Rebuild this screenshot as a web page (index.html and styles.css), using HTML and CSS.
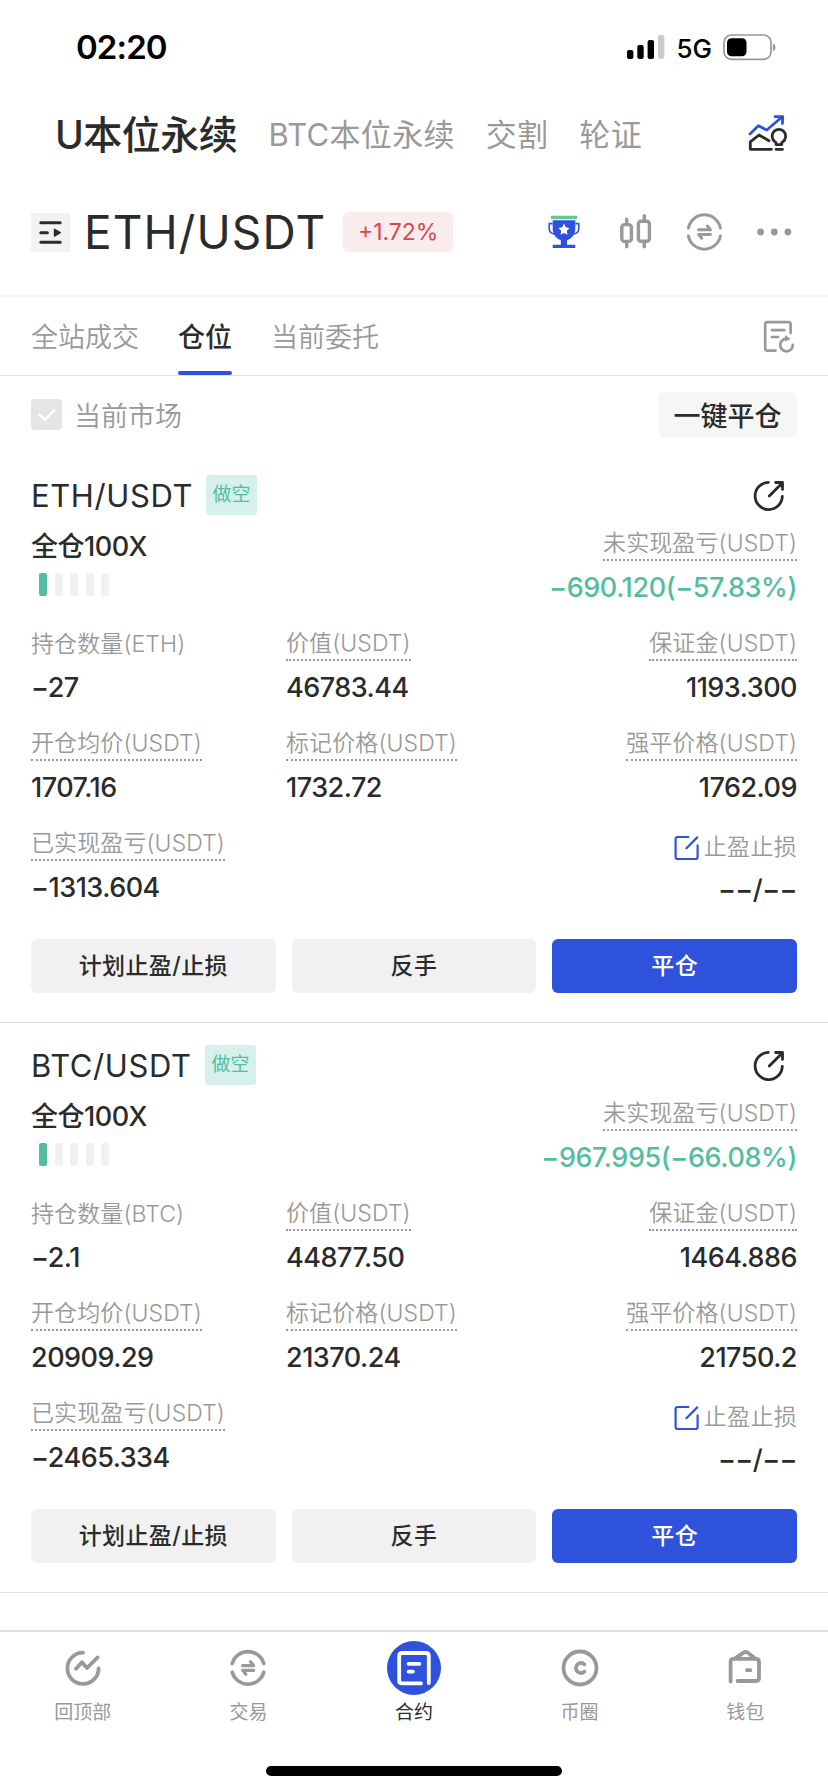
FILE: index.html
```html
<!DOCTYPE html>
<html lang="zh-CN">

<head>
    <meta charset="UTF-8">
    <title>合约 - 仓位</title>
    <link rel="stylesheet" href="styles.css">
</head>

<body>
    <!-- 状态栏 -->
    <div class="status_bar">
        <span class="status_time">02:20</span>
        <svg class="status_signal" width="38" height="26" viewBox="0 0 38 26">
            <rect x="0" y="16" width="6.4" height="9" rx="2" />
            <rect x="10.3" y="11" width="6.4" height="14" rx="2" />
            <rect x="20.6" y="6" width="6.4" height="19" rx="2" />
            <rect x="31" y="1" width="6.4" height="24" rx="2" fill="#ccc" />
        </svg>
        <span class="status_net">5G</span>
        <svg class="status_battery" width="54" height="27" viewBox="0 0 54 27">
            <rect x="1" y="1" width="47" height="24.4" rx="7.5" fill="none" stroke="#999" stroke-width="1.7" />
            <rect x="4" y="4.2" width="19.5" height="18" rx="4.5" />
            <path d="M49.8 9.5c3.6 1.2 3.6 6.6 0 7.8z" fill="#999" />
        </svg>
    </div>

    <!-- 合约类型 -->
    <div class="type_nav">
        <span class="type_item type_on">U本位永续</span>
        <span class="type_item">BTC本位永续</span>
        <span class="type_item">交割</span>
        <span class="type_item">轮证</span>
        <svg class="type_icon" width="46" height="44" viewBox="0 0 46 44" fill="none" stroke="#2b2b2b" stroke-width="2.8" stroke-linecap="round" stroke-linejoin="round">
            <path d="M5 24L13.3 15.7L21.7 20L37 7M30 6.7H37.8L37.4 13.5" stroke="#2f52dd" />
            <path d="M24 30.7L14 25L5.3 31.8V39.3H26.5M31 39.3H37.5" />
            <path d="M31 34.6V32.4C28.6 31.2 27.2 29 27.2 26A6.7 6.7 0 0 1 40.6 26C40.6 29 39.2 31.2 36.8 32.4V34.6Z" />
        </svg>
    </div>

    <!-- 当前币对 -->
    <div class="pair_bar">
        <span class="pair_menu">
            <svg width="39" height="39" viewBox="0 0 39 39" stroke="#2b2b2b" stroke-width="3" stroke-linecap="round">
                <path d="M9.8 9.7H29.2M9.8 19.7H16.4M9.8 29.3H29.2" />
                <path d="M23.5 16.3V23.1L29.3 19.7Z" fill="#2b2b2b" stroke-width="1.4" stroke-linejoin="round" />
            </svg>
        </span>
        <span class="pair_name">ETH/USDT</span>
        <span class="pair_rate">+1.72%</span>
        <div class="pair_tools">
            <svg width="40" height="40" viewBox="0 0 40 40">
                <path d="M7 3.7H33V7H7Z" fill="#5ecb93" />
                <path d="M8.7 8.3H31.3V17C31.3 22.5 28 26.5 23 28.2V32.8H31.3V36H8.7V32.8H16.8V28.2C12 26.5 8.7 22.5 8.7 17Z" fill="#2f52dd" />
                <path d="M8.7 11.6H5.2V16.5C5.2 19.5 7.5 21.6 10.5 22M31.3 11.6H34.8V16.5C34.8 19.5 32.5 21.6 29.5 22" fill="none" stroke="#2f52dd" stroke-width="1.6" />
                <path d="M20 11.6L21.8 15.3L25.6 15.9L22.8 18.7L23.5 22.8L20 20.9L16.5 22.8L17.2 18.7L14.4 15.9L18.2 15.3Z" fill="#fff" />
            </svg>
            <svg width="40" height="40" viewBox="0 0 40 40" fill="none" stroke="#999" stroke-width="3.4" stroke-linecap="round">
                <rect x="7.8" y="12.6" width="9.6" height="16.8" rx="2.6" />
                <rect x="24.4" y="9.2" width="11" height="20" rx="2.6" />
                <path d="M12.7 7.2V12M12.7 30V34.8M30.3 3.8V9M30.3 30V34.8" />
            </svg>
            <svg width="40" height="40" viewBox="0 0 40 40" fill="none" stroke="#999" stroke-width="3" stroke-linecap="round" stroke-linejoin="round">
                <path d="M4.4 16A16.3 16.3 0 0 1 36.4 16M36.4 24A16.3 16.3 0 0 1 4.4 24" />
                <path d="M14.6 17.8H26.4L23.4 14M26.4 22.4H14.6M17.8 26.2L15 22.8" />
            </svg>
            <svg width="40" height="40" viewBox="0 0 40 40" fill="#999">
                <circle cx="6.6" cy="20" r="3.4" />
                <circle cx="20.3" cy="20" r="3.4" />
                <circle cx="33.9" cy="20" r="3.4" />
            </svg>
        </div>
    </div>

    <!-- 选项卡 -->
    <div class="tabs">
        <span class="tab">全站成交</span>
        <span class="tab tab_on">仓位</span>
        <span class="tab">当前委托</span>
        <svg class="tabs_icon" width="34" height="34" viewBox="0 0 34 34" fill="none" stroke="#999" stroke-width="2.7" stroke-linecap="round" stroke-linejoin="round">
            <path d="M28.6 14V5.2Q28.6 3.2 26.6 3.2H5.2Q3.2 3.2 3.2 5.2V29.6Q3.2 31.6 5.2 31.6H13.6M10 11.2H22.3M10 18H16" />
            <path d="M30.8 25.8A6.3 6.3 0 1 1 24.6 19.7" />
            <path d="M23.5 17V21.6L27.6 20Z" fill="#999" stroke-width="1.2" />
        </svg>
    </div>

    <div class="filter">
        <span class="check">
            <svg width="31" height="31" viewBox="0 0 31 31" fill="none" stroke="#fff" stroke-width="2.6">
                <path d="M7.6 15L13.8 20.8L24 10.6" />
            </svg>
        </span>
        <span class="check_text">当前市场</span>
        <span class="close_all">一键平仓</span>
    </div>

    <!-- 持仓列表 -->
    <div class="list">
        <div class="card">
            <div class="card_head">
                <span class="card_name">ETH/USDT</span>
                <span class="card_side">做空</span>
                <svg class="card_share" width="34" height="34" viewBox="0 0 34 34" fill="none" stroke="#2b2b2b" stroke-width="2.8" stroke-linecap="round" stroke-linejoin="round">
                    <path d="M16.3 3.4A13.6 13.6 0 1 0 30.3 17.4M17.3 17L30 4.2M23.6 3.5H30.5V10.4" />
                </svg>
            </div>
            <div class="card_info">
                <div class="card_mode">
                    <div class="mode_text">全仓100X</div>
                    <div class="level"><i class="level_on"></i><i></i><i></i><i></i><i></i></div>
                </div>
                <div class="cell cell_right cell_profit">
                    <span class="label dotted">未实现盈亏(USDT)</span>
                    <span class="profit">−690.120(−57.83%)</span>
                </div>
            </div>
            <div class="card_grid">
                <div class="cell"><span class="label">持仓数量(ETH)</span><span class="value">−27</span></div>
                <div class="cell"><span class="label dotted">价值(USDT)</span><span class="value">46783.44</span></div>
                <div class="cell cell_right"><span class="label dotted">保证金(USDT)</span><span class="value">1193.300</span></div>
                <div class="cell"><span class="label dotted">开仓均价(USDT)</span><span class="value">1707.16</span></div>
                <div class="cell"><span class="label dotted">标记价格(USDT)</span><span class="value">1732.72</span></div>
                <div class="cell cell_right"><span class="label dotted">强平价格(USDT)</span><span class="value">1762.09</span></div>
                <div class="cell"><span class="label dotted">已实现盈亏(USDT)</span><span class="value">−1313.604</span></div>
                <div class="cell"></div>
                <div class="cell cell_right cell_stop">
                    <span class="label"><svg class="edit" width="26" height="26" viewBox="0 0 26 26" fill="none" stroke="#2f52dd" stroke-width="2.2" stroke-linecap="round" stroke-linejoin="round"><path d="M14.4 2H3.6Q1.6 2 1.6 4V22Q1.6 24 3.6 24H21.6Q23.6 24 23.6 22V10.4M12.4 13.2L23.2 2.4" /></svg>止盈止损</span>
                    <span class="value value_none">−−/−−</span>
                </div>
            </div>
            <div class="card_btns">
                <span class="btn">计划止盈/止损</span>
                <span class="btn">反手</span>
                <span class="btn btn_main">平仓</span>
            </div>
        </div>

        <div class="card">
            <div class="card_head">
                <span class="card_name">BTC/USDT</span>
                <span class="card_side">做空</span>
                <svg class="card_share" width="34" height="34" viewBox="0 0 34 34" fill="none" stroke="#2b2b2b" stroke-width="2.8" stroke-linecap="round" stroke-linejoin="round">
                    <path d="M16.3 3.4A13.6 13.6 0 1 0 30.3 17.4M17.3 17L30 4.2M23.6 3.5H30.5V10.4" />
                </svg>
            </div>
            <div class="card_info">
                <div class="card_mode">
                    <div class="mode_text">全仓100X</div>
                    <div class="level"><i class="level_on"></i><i></i><i></i><i></i><i></i></div>
                </div>
                <div class="cell cell_right cell_profit">
                    <span class="label dotted">未实现盈亏(USDT)</span>
                    <span class="profit">−967.995(−66.08%)</span>
                </div>
            </div>
            <div class="card_grid">
                <div class="cell"><span class="label">持仓数量(BTC)</span><span class="value">−2.1</span></div>
                <div class="cell"><span class="label dotted">价值(USDT)</span><span class="value">44877.50</span></div>
                <div class="cell cell_right"><span class="label dotted">保证金(USDT)</span><span class="value">1464.886</span></div>
                <div class="cell"><span class="label dotted">开仓均价(USDT)</span><span class="value">20909.29</span></div>
                <div class="cell"><span class="label dotted">标记价格(USDT)</span><span class="value">21370.24</span></div>
                <div class="cell cell_right"><span class="label dotted">强平价格(USDT)</span><span class="value">21750.2</span></div>
                <div class="cell"><span class="label dotted">已实现盈亏(USDT)</span><span class="value">−2465.334</span></div>
                <div class="cell"></div>
                <div class="cell cell_right cell_stop">
                    <span class="label"><svg class="edit" width="26" height="26" viewBox="0 0 26 26" fill="none" stroke="#2f52dd" stroke-width="2.2" stroke-linecap="round" stroke-linejoin="round"><path d="M14.4 2H3.6Q1.6 2 1.6 4V22Q1.6 24 3.6 24H21.6Q23.6 24 23.6 22V10.4M12.4 13.2L23.2 2.4" /></svg>止盈止损</span>
                    <span class="value value_none">−−/−−</span>
                </div>
            </div>
            <div class="card_btns">
                <span class="btn">计划止盈/止损</span>
                <span class="btn">反手</span>
                <span class="btn btn_main">平仓</span>
            </div>
        </div>
    </div>

    <!-- 底部导航 -->
    <div class="footer">
        <div class="foot_nav">
            <div class="foot_item">
                <svg width="54" height="54" viewBox="0 0 54 54" fill="none" stroke="#999" stroke-width="3.8" stroke-linecap="round" stroke-linejoin="round">
                    <path d="M27 11.7A15.6 15.6 0 1 0 42.6 27.4M20 27.8L26 21.2L31 27L41.6 16.4" />
                </svg>
                <span>回顶部</span>
            </div>
            <div class="foot_item">
                <svg width="54" height="54" viewBox="0 0 54 54" fill="none" stroke="#999" stroke-width="3.6" stroke-linecap="round" stroke-linejoin="round">
                    <path d="M11.2 22.6A16.4 16.4 0 0 1 42.8 22.6M42.8 31.2A16.4 16.4 0 0 1 11.2 31.2" />
                    <path d="M21.6 24.6H32.6L29.4 20.8M32.6 29.4H21.6M24.8 33.2L22 29.6" stroke-width="3.2" />
                </svg>
                <span>交易</span>
            </div>
            <div class="foot_item foot_on">
                <svg width="54" height="54" viewBox="0 0 54 54" fill="none" stroke="#fff" stroke-width="3.8" stroke-linecap="round" stroke-linejoin="round">
                    <circle cx="27" cy="27" r="27" fill="#2f52dd" stroke="none" />
                    <path d="M41.8 42V15Q41.8 12 38.8 12H15.2Q12.2 12 12.2 15V39.4Q12.2 42.4 15.2 42.4H34M21.6 22.8H32.4M21.6 30.6H26" />
                </svg>
                <span>合约</span>
            </div>
            <div class="foot_item">
                <svg width="54" height="54" viewBox="0 0 54 54" fill="none" stroke="#999" stroke-width="3.8" stroke-linecap="round">
                    <circle cx="27" cy="27" r="16.5" />
                    <path d="M31.4 23.4A5 5 0 1 0 31.4 30.6" />
                </svg>
                <span>币圈</span>
            </div>
            <div class="foot_item">
                <svg width="54" height="54" viewBox="0 0 54 54" fill="none" stroke="#999" stroke-width="3.8" stroke-linecap="round" stroke-linejoin="round">
                    <path d="M12.6 40.4V20.8Q12.6 17.8 15.6 17.8H38Q41 17.8 41 20.8V37Q41 40 38 40H19.6M17 17.4L25.6 11.6Q27.6 10.4 29.6 11.6L36 16.6M29 29.2H32.4" />
                </svg>
                <span>钱包</span>
            </div>
        </div>
        <div class="home_bar"></div>
    </div>
</body>

</html>
```
FILE: styles.css
```css
* {
    box-sizing: border-box;
}

body {
    display: flex;
    flex-direction: column;
    width: 828px;
    height: 1792px;
    margin: 0;
    overflow: hidden;
    background-color: #fff;
    color: #2b2b2b;
    font-family: Inter, "Noto Sans CJK SC", sans-serif;
    white-space: nowrap;
}

svg {
    display: block;
    flex: none;
}

/* 状态栏 */
.status_bar {
    display: flex;
    align-items: center;
    height: 94px;
    padding: 0 51px 0 76px;
    color: #000;
}

.status_time {
    margin-right: auto;
    font-size: 33px;
    font-weight: 600;
    letter-spacing: -0.9px;
}

.status_net {
    margin: 2px 11px 0 11px;
    font-size: 26px;
    font-weight: 500;
}

/* 合约类型 */
.type_nav {
    display: flex;
    align-items: center;
    height: 80px;
    padding: 0 37px 4px 55px;
}

.type_item {
    margin-right: 31px;
    color: #999;
    font-size: 31px;
    letter-spacing: 0.3px;
}

.type_on {
    color: #2b2b2b;
    font-size: 39px;
    font-weight: 450;
    letter-spacing: -0.5px;
}

.type_icon {
    margin-left: auto;
}

/* 当前币对 */
.pair_bar {
    display: flex;
    align-items: center;
    height: 121px;
    padding: 0 34px 5px 31px;
}

.pair_menu {
    background-color: #f2f2f2;
}

.pair_name {
    margin-left: 14px;
    font-size: 46px;
    letter-spacing: 1.1px;
}

.pair_rate {
    margin-left: 17px;
    width: 110px;
    border-radius: 6px;
    background-color: #faeced;
    color: #d9474a;
    font-size: 23px;
    line-height: 40px;
    text-align: center;
}

.pair_tools {
    display: flex;
    gap: 30px;
    margin-left: auto;
}

/* 选项卡 */
.tabs {
    display: flex;
    align-items: center;
    height: 81px;
    padding: 0 32px 0 31px;
    border-top: 2px solid #f6f6f6;
    border-bottom: 1px solid #e4e4e4;
}

.tab {
    height: 78px;
    margin-right: 39px;
    color: #999;
    font-size: 27px;
    font-weight: 350;
    line-height: 81px;
}

.tab_on {
    position: relative;
    color: #2b2b2b;
    font-weight: 500;
}

.tab_on::after {
    content: "";
    position: absolute;
    left: 0;
    right: 0;
    bottom: 0;
    height: 4px;
    border-radius: 2px;
    background-color: #2f52dd;
}

.tabs_icon {
    margin-left: auto;
}

.filter {
    display: flex;
    align-items: center;
    height: 77px;
    padding: 0 31px;
}

.check {
    border-radius: 4px;
    background-color: #e5e5e5;
}

.check_text {
    margin-left: 12px;
    color: #999;
    font-size: 27px;
    font-weight: 350;
}

.close_all {
    width: 139px;
    height: 46px;
    margin-left: auto;
    border-radius: 6px;
    background-color: #f6f6f6;
    font-size: 27px;
    font-weight: 500;
    line-height: 49px;
    text-align: center;
}

/* 持仓 */
.list {
    flex: 1;
}

.card {
    height: 570px;
    padding: 22px 31px 0 31px;
    border-bottom: 1px solid #dedede;
}

.card_head {
    display: flex;
    align-items: center;
    height: 40px;
}

.card_name {
    min-width: 161px;
    font-size: 31px;
    letter-spacing: 0.6px;
}

.card_side {
    width: 51px;
    margin-left: 13px;
    border-radius: 3px;
    background-color: #d6f1eb;
    color: #54bda0;
    font-size: 19px;
    line-height: 40px;
    text-align: center;
}

.card_share {
    margin: 2px 11px 0 auto;
}

.card_info {
    display: flex;
    justify-content: space-between;
    height: 105px;
}

.mode_text {
    margin-top: 13px;
    font-size: 27px;
    font-weight: 450;
    letter-spacing: -0.5px;
    line-height: 38px;
}

.level {
    display: flex;
    gap: 7.5px;
    margin: 7px 0 0 8px;
}

.level i {
    width: 8px;
    height: 23px;
    border-radius: 2px;
    background-color: #f1f1f1;
}

.level .level_on {
    background-color: #54bda0;
}

.card_grid {
    display: grid;
    grid-template-columns: 255px 255px 1fr;
    grid-auto-rows: 100px;
}

.cell {
    display: flex;
    flex-direction: column;
    align-items: flex-start;
    padding-top: 8px;
}

.cell_right {
    align-items: flex-end;
}

.cell_profit {
    padding-top: 13px;
}

.label {
    display: flex;
    align-items: center;
    height: 33px;
    color: #999;
    font-size: 23px;
    font-weight: 350;
    letter-spacing: 0.1px;
    line-height: 31px;
}

.dotted {
    border-bottom: 2px dotted #999;
}

.value {
    margin-top: 9px;
    font-size: 27px;
    font-weight: 450;
    letter-spacing: -0.5px;
    line-height: 36px;
}

.profit {
    margin-top: 9px;
    color: #54bda0;
    font-size: 27px;
    font-weight: 450;
    letter-spacing: -0.4px;
    line-height: 36px;
}

.cell_stop {
    padding-top: 11px;
}

.value_none {
    margin-top: 8px;
    letter-spacing: -0.6px;
}

.edit {
    margin-right: 4px;
}

.cell_stop .label {
    letter-spacing: 0.3px;
}

.card_btns {
    display: grid;
    grid-template-columns: repeat(3, 1fr);
    gap: 16px;
    margin-top: 19px;
}

.btn {
    height: 54px;
    border-radius: 6px;
    background-color: #f1f1f1;
    font-size: 23px;
    font-weight: 500;
    letter-spacing: 0.4px;
    line-height: 54px;
    text-align: center;
}

.btn_main {
    background-color: #2f52dd;
    color: #fff;
}

/* 底部导航 */
.footer {
    height: 162px;
    border-top: 2px solid #dedede;
}

.foot_nav {
    display: flex;
    padding-top: 9px;
}

.foot_item {
    display: flex;
    flex: 1;
    flex-direction: column;
    align-items: center;
    color: #999;
    font-size: 19px;
}

.foot_item span {
    margin-top: 4px;
    line-height: 28px;
}

.foot_on {
    color: #2b2b2b;
}

.home_bar {
    width: 296px;
    height: 10px;
    margin: 39px auto 0;
    border-radius: 5px;
    background-color: #000;
}
```
